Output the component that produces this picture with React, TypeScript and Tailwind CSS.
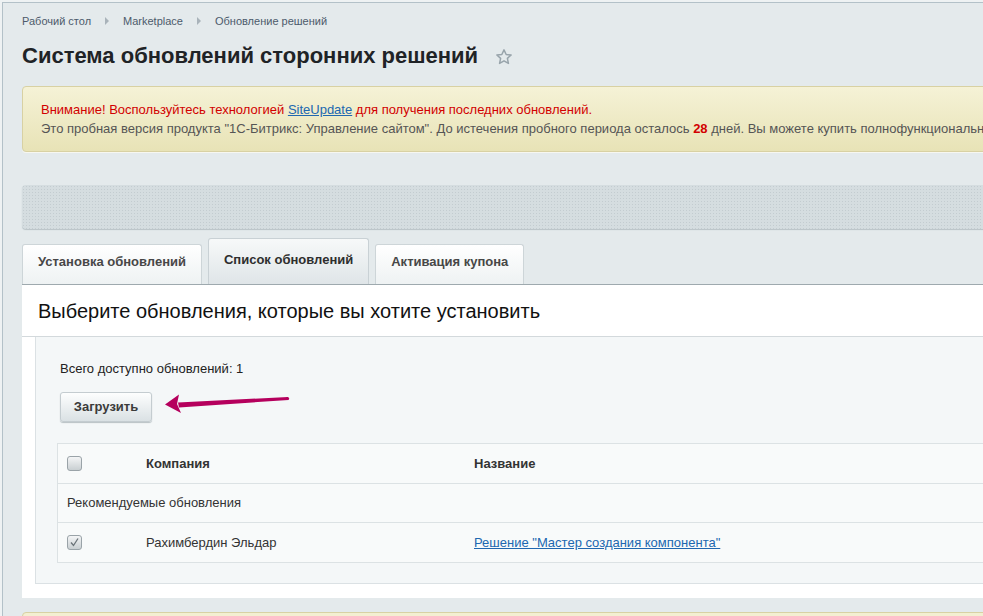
import React from 'react';

function Crumb({ children, last }: { children: React.ReactNode; last?: boolean }) {
  return (
    <>
      <span className="text-[#4c5a6b]">{children}</span>
      {!last && (
        <span className="mx-[14px] inline-block w-0 h-0 border-y-[4px] border-y-transparent border-l-[4px] border-l-[#a9b3ba]" />
      )}
    </>
  );
}

function Checkbox({ checked }: { checked?: boolean }) {
  return (
    <span className="inline-flex items-center justify-center w-[15px] h-[15px] rounded-[3px] border border-[#9aa3a8] bg-gradient-to-b from-[#f4f5f6] to-[#c9cfd2]">
      {checked && (
        <svg width="11" height="11" viewBox="0 0 11 11">
          <path d="M2 5.5 L4.5 8.5 L9 1.5" fill="none" stroke="#6b7378" strokeWidth="1.3" />
        </svg>
      )}
    </span>
  );
}

function Tab({ label, active }: { label: string; active?: boolean }) {
  return (
    <div
      className={
        active
          ? 'h-[46px] px-[15px] pt-[11px] border border-b-0 border-[#c9d1d5] rounded-t-[3px] bg-gradient-to-b from-[#f7f9f9] to-[#dfe5e8] text-[13px] font-bold text-[#2e2e2e]'
          : 'h-[40px] px-[15px] pt-[7px] border border-b-0 border-[#cdd5d8] rounded-t-[3px] bg-gradient-to-b from-[#ffffff] to-[#eef2f3] text-[13px] font-bold text-[#474747]'
      }
    >
      {label}
    </div>
  );
}

export default function App() {
  return (
    <div className="w-[983px] h-[616px] overflow-hidden bg-[#eef2f3] pt-[2px] pl-[2px] font-['Liberation_Sans',Arial,sans-serif]">
      <div className="w-[1200px] h-[700px] bg-[#e4eaec] border-l border-t border-[#b3c1c8] pl-[19px]">
        {/* breadcrumbs */}
        <div className="pt-[8px] h-[28px] flex items-center text-[11px] leading-[13px]">
          <Crumb>Рабочий стол</Crumb>
          <Crumb>Marketplace</Crumb>
          <Crumb last>Обновление решений</Crumb>
        </div>

        {/* title */}
        <div className="flex items-center h-[40px] mt-[5px]">
          <h1 className="text-[22px] font-bold text-[#1f2326] leading-[26px]">
            Система обновлений сторонних решений
          </h1>
          <svg className="ml-[17px] mt-[2px]" width="18" height="18" viewBox="0 0 24 24">
            <path
              d="M12 2.5l2.9 6.2 6.6.7-5 4.5 1.4 6.6L12 17.1l-5.9 3.4 1.4-6.6-5-4.5 6.6-.7z"
              fill="none"
              stroke="#98a4ab"
              strokeWidth="2"
              strokeLinejoin="round"
            />
          </svg>
        </div>

        {/* notice */}
        <div className="mt-[10px] h-[66px] rounded-[4px] border border-[#d8d1a3] bg-gradient-to-b from-[#f5f2d6] to-[#e8e3b6] pl-[18px] pt-[13px] text-[13px] leading-[19px] whitespace-nowrap shadow-[0_1px_0_#f7f7f0]">
          <div className="text-[#d20000]">
            Внимание! Воспользуйтесь технологией{' '}
            <span className="text-[#2067b0] underline">SiteUpdate</span> для получения последних обновлений.
          </div>
          <div className="text-[#555555]">
            Это пробная версия продукта "1С-Битрикс: Управление сайтом". До истечения пробного периода осталось{' '}
            <span className="text-[#d20000] font-bold">28</span> дней. Вы можете купить полнофункциональную версию продукта.
          </div>
        </div>

        {/* grey toolbar */}
        <div className="mt-[33px] h-[44px] rounded-[4px] bg-[#d5dde0] bg-[radial-gradient(#c3ccd0_0.8px,transparent_0.9px)] bg-[length:3px_3px] shadow-[0_1px_1px_#b9c3c7]" />

        {/* tabs */}
        <div className="mt-[9px] flex items-end gap-[6px] h-[46px]">
          <Tab label="Установка обновлений" />
          <Tab label="Список обновлений" active />
          <Tab label="Активация купона" />
        </div>

        {/* content panel */}
        <div className="h-[314px] bg-white border-t border-[#9ea9ae]">
          <div className="h-[52px] pl-[16px] flex items-center text-[20px] text-[#111] border-b border-[#d3d9dc]">
            Выберите обновления, которые вы хотите установить
          </div>
          <div className="relative ml-[13px] h-[247px] bg-[#f4f7f8] border border-t-0 border-[#dbe1e4] pl-[24px] pt-[24px]">
            <div className="text-[13px] text-[#222] leading-[15px]">Всего доступно обновлений: 1</div>
            <button className="mt-[16px] h-[30px] w-[92px] rounded-[3px] border border-[#c4ccd0] bg-gradient-to-b from-[#fdfefe] to-[#dae1e4] shadow-[0_1px_1px_#b8c0c4] text-[13px] font-bold text-[#3b3b3b]">
              Загрузить
            </button>
            <svg className="absolute left-[128px] top-[55px]" width="126" height="22" viewBox="0 0 126 22">
              <path d="M14 10.5 L124 5 L124.5 8 L15 15.5 Z" fill="#b5005d" />
              <circle cx="123.5" cy="6.5" r="1.6" fill="#b5005d" />
              <path d="M1 12.5 L15 2.5 L13 12 L17 21 Z" fill="#b5005d" />
            </svg>

            {/* table */}
            <div className="mt-[21px] -ml-[3px] w-[1000px] border border-r-0 border-[#dce2e4] bg-[#f8fafa] text-[13px]">
              <div className="h-[40px] flex items-center border-b border-[#dce2e4]">
                <div className="w-[88px] pl-[9px] flex items-center">
                  <Checkbox />
                </div>
                <div className="w-[328px] font-bold text-[#333]">Компания</div>
                <div className="font-bold text-[#333]">Название</div>
              </div>
              <div className="h-[39px] flex items-center border-b border-[#dce2e4] pl-[9px] text-[#333]">
                Рекомендуемые обновления
              </div>
              <div className="h-[39px] flex items-center text-[#333]">
                <div className="w-[88px] pl-[9px] flex items-center">
                  <Checkbox checked />
                </div>
                <div className="w-[328px]">Рахимбердин Эльдар</div>
                <div className="text-[#2067b0] underline">Решение "Мастер создания компонента"</div>
              </div>
            </div>
          </div>
        </div>

        <div className="mt-[14px] h-[40px] rounded-[4px] border border-[#d8d1a3] bg-[#f3efd1]" />
      </div>
    </div>
  );
}
